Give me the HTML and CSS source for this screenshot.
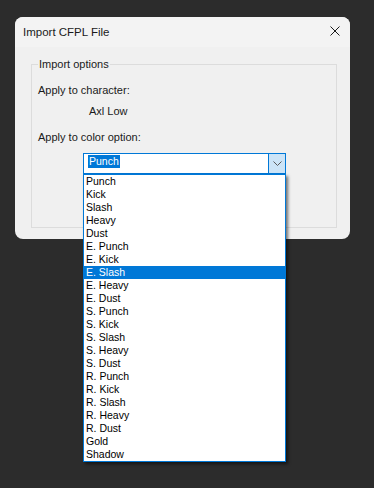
FILE: index.html
```html
<!DOCTYPE html>
<html>
<head>
<meta charset="utf-8">
<link rel="stylesheet" href="styles.css">
</head>
<body>
<div class="dialog">
  <div class="titlebar">
    <span class="title">Import CFPL File</span>
    <svg class="close" width="10" height="10" viewBox="0 0 10 10"><path d="M0.5 0.5 L9.5 9.5 M9.5 0.5 L0.5 9.5" stroke="#1a1a1a" stroke-width="1" fill="none"/></svg>
  </div>
  <div class="body">
    <fieldset class="group">
      <legend>Import options</legend>
      <div class="label first">Apply to character:</div>
      <div class="label value">Axl Low</div>
      <div class="label second">Apply to color option:</div>
      <div class="combo">
        <div class="combo-field"><span class="sel">Punch</span></div>
        <div class="combo-btn">
          <svg width="9" height="5" viewBox="0 0 9 5"><path d="M0.5 0.5 L4.5 4.5 L8.5 0.5" stroke="#5a5a5a" stroke-width="1" fill="none"/></svg>
        </div>
        <ul class="list">
          <li>Punch</li>
          <li>Kick</li>
          <li>Slash</li>
          <li>Heavy</li>
          <li>Dust</li>
          <li>E. Punch</li>
          <li>E. Kick</li>
          <li class="active">E. Slash</li>
          <li>E. Heavy</li>
          <li>E. Dust</li>
          <li>S. Punch</li>
          <li>S. Kick</li>
          <li>S. Slash</li>
          <li>S. Heavy</li>
          <li>S. Dust</li>
          <li>R. Punch</li>
          <li>R. Kick</li>
          <li>R. Slash</li>
          <li>R. Heavy</li>
          <li>R. Dust</li>
          <li>Gold</li>
          <li>Shadow</li>
        </ul>
      </div>
    </fieldset>
  </div>
</div>
</body>
</html>
```
FILE: styles.css
```css
html, body {
  margin: 0;
  padding: 0;
}
body {
  background: #2c2c2c;
  width: 374px;
  height: 488px;
  overflow: hidden;
  font-family: "Liberation Sans", Arial, sans-serif;
  color: #000;
  padding-top: 17px;
  box-sizing: border-box;
}
.dialog {
  margin-left: 15px;
  width: 335px;
  height: 222px;
  border-radius: 8px;
  background: #f0f0f0;
  overflow: visible;
  position: relative;
}
.titlebar {
  height: 30px;
  background: #f3f3f3;
  border-radius: 8px 8px 0 0;
  display: flex;
  align-items: center;
  justify-content: space-between;
  padding: 0 10px 0 8px;
}
.title {
  font-size: 11.5px;
  line-height: 14px;
  color: #1a1a1a;
}
.close {
  display: block;
  margin-top: -2px;
}
.body {
  padding: 10px 13px 0 16px;
}
.group {
  margin: 0;
  padding: 0 0 53px 6px;
  border: 1px solid #dcdcdc;
  min-width: 0;
}
.group legend {
  padding: 0 1px;
  margin-left: 0;
  font-size: 11px;
  line-height: 14px;
  color: #1a1a1a;
}
.label {
  font-size: 11px;
  line-height: 14px;
  color: #1a1a1a;
}
.first { margin-top: 12px; }
.value { margin-top: 7px; margin-left: 51px; }
.second { margin-top: 12px; }
.combo {
  margin-top: 9px;
  margin-left: 45px;
  width: 203px;
  height: 21px;
  box-sizing: border-box;
  border: 1px solid #0078d7;
  background: #fff;
  display: flex;
  position: relative;
}
.combo-field {
  flex: 1;
  padding: 1px 0 0 4px;
  font-size: 10.5px;
  line-height: 13px;
}
.sel {
  display: inline-block;
  background: #0078d7;
  color: #fff;
  padding: 0 1px;
  line-height: 13px;
}
.combo-btn {
  width: 16px;
  background: #cce4f7;
  border-left: 1px solid #0078d7;
  display: flex;
  align-items: center;
  justify-content: center;
}
.list {
  position: absolute;
  left: -1px;
  top: 20px;
  width: 203px;
  box-sizing: border-box;
  margin: 0;
  padding: 0;
  list-style: none;
  background: #fff;
  border: 1px solid #0078d7;
  box-shadow: 2px 2px 3px rgba(0, 0, 0, 0.55);
  font-size: 10.5px;
  z-index: 5;
}
.list li {
  height: 13px;
  line-height: 13px;
  padding-left: 2px;
  color: #000;
  white-space: nowrap;
}
.list li.active {
  background: #0078d7;
  color: #fff;
}
```
